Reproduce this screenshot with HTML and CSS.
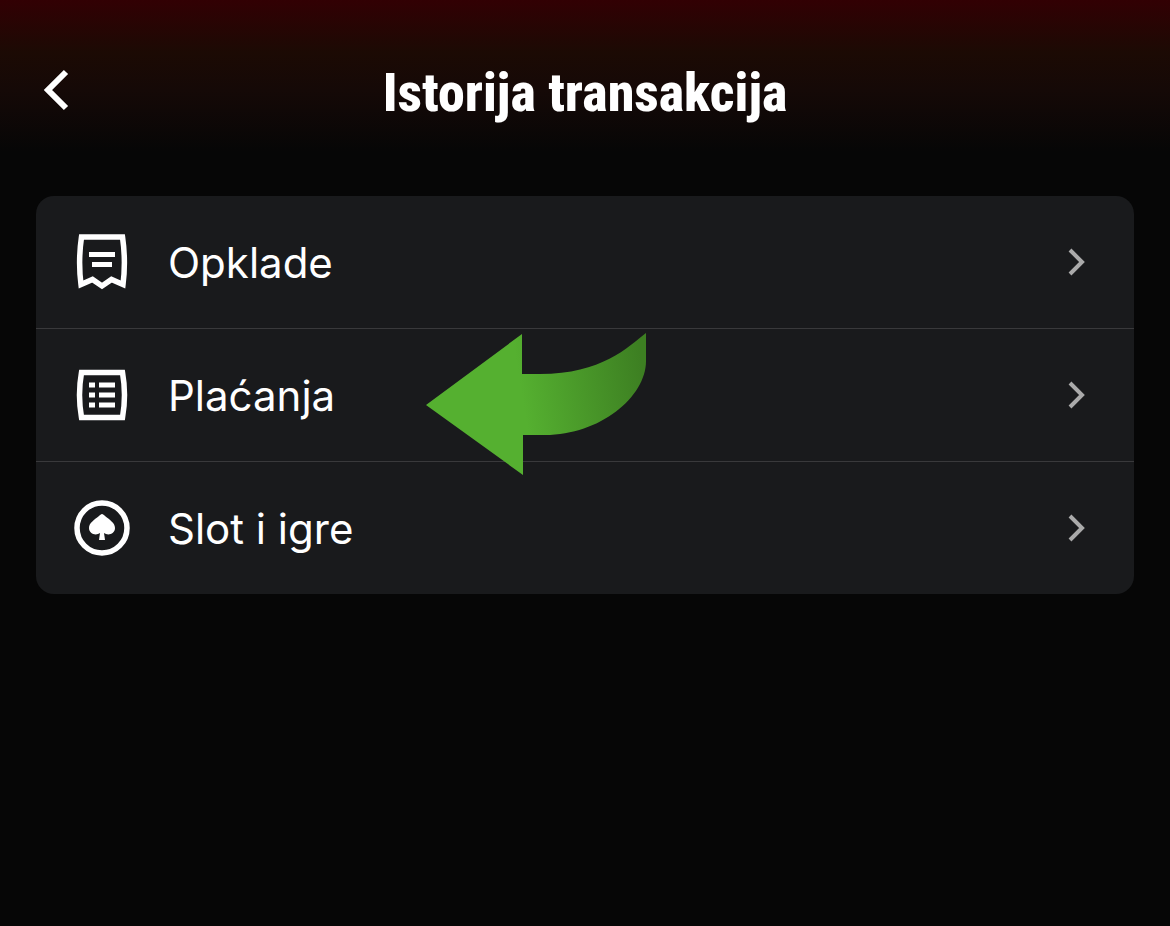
FILE: index.html
```
<!DOCTYPE html>
<html lang="sr-Latn">
<head>
    <meta charset="UTF-8">
    <meta name="viewport" content="width=device-width, initial-scale=1.0">
    <title>Istorija transakcija</title>
    <link rel="stylesheet" href="styles.css">
</head>
<body>
    <header class="header">
        <button type="button" class="back-btn" aria-label="Nazad">
            <svg width="32" height="48" viewBox="0 0 32 48" fill="none" stroke="#fff" stroke-width="6">
                <path d="M26 6 8 24l18 18"/>
            </svg>
        </button>
        <h1>Istorija transakcija</h1>
    </header>

    <main class="content">
        <nav class="menu">
            <a href="#opklade" class="menu-item">
                <svg class="icon" viewBox="0 0 60 60" fill="none" stroke="#fff" stroke-width="5.500">
                    <path d="M9.500 5h41q3.500 24 .5 47.500L39.500 47.500 30 54l-9.500-6.500L9 52.500Q6 29 9.500 5z"/>
                    <path stroke-width="5" d="M17 22.500h26M20 32.500h20"/>
                </svg>
                <span class="label">Opklade</span>
                <svg class="chevron" viewBox="0 0 20 32"><path d="M4 4l12 12L4 28"/></svg>
            </a>
            <a href="#placanja" class="menu-item">
                <svg class="icon" viewBox="0 0 60 60" fill="none" stroke="#fff" stroke-width="5.500">
                    <path d="M9.500 7.500h41q4 22.500 0 45h-41q-4-22.500 0-45z"/>
                    <path stroke-width="5" d="M17 20h6M27 20h16M17 30h6M27 30h16M17 40h6M27 40h16"/>
                </svg>
                <span class="label">Plaćanja</span>
                <svg class="chevron" viewBox="0 0 20 32"><path d="M4 4l12 12L4 28"/></svg>
                <!-- strelica preko stavke -->
                <svg class="arrow" viewBox="0 0 222 144">
                    <defs>
                        <linearGradient id="arrowFill" gradientUnits="userSpaceOnUse" x1="98" y1="70" x2="220" y2="50">
                            <stop offset="0" stop-color="#55b030"/>
                            <stop offset="1" stop-color="#3d7f22"/>
                        </linearGradient>
                    </defs>
                    <path fill="url(#arrowFill)" d="M1 73 97 2v40h18c62 0 88-27 106-41v28c0 36-46 74-101 74H98v40z"/>
                </svg>
            </a>
            <a href="#slot" class="menu-item">
                <svg class="icon" viewBox="0 0 60 60">
                    <circle cx="30" cy="30" r="25" fill="none" stroke="#fff" stroke-width="5.500"/>
                    <path fill="#fff" d="M30 16c1 0 2 1 3 2 5 4 10 7 10 12 0 6-7 8-11 5l1 7h-6l1-7c-4 3-11 1-11-5 0-5 5-8 10-12 1-1 2-2 3-2z"/>
                </svg>
                <span class="label">Slot i igre</span>
                <svg class="chevron" viewBox="0 0 20 32"><path d="M4 4l12 12L4 28"/></svg>
            </a>
        </nav>
    </main>
</body>
</html>
```
FILE: styles.css
```
* {
    box-sizing: border-box;
}
body {
    margin: 0;
    min-height: 100vh;
    background: #060606 linear-gradient(#320003 0, #1c0a04 52px, #150907 90px, #060606 152px) no-repeat;
    color: #fff;
    font-family: Inter, "Liberation Sans", sans-serif;
}
.header {
    display: grid;
    grid-template-columns: 32px 1fr 32px;
    align-items: center;
    height: 180px;
    padding: 0 40px;
}
.back-btn {
    padding: 0;
    border: none;
    background: none;
    cursor: pointer;
}
.back-btn svg {
    display: block;
}
.header h1 {
    margin: 0;
    padding-top: 6px;
    font-family: "Roboto Condensed", Roboto, sans-serif;
    font-size: 54px;
    font-weight: 800;
    line-height: 64px;
    text-align: center;
    white-space: nowrap;
}
.content {
    padding: 16px 36px;
}
.menu {
    border-radius: 18px;
    background: #191a1c;
}
.menu-item {
    position: relative;
    display: flex;
    align-items: center;
    height: 132px;
    padding: 0 48px 0 36px;
    color: #fff;
    text-decoration: none;
}
.menu-item + .menu-item {
    height: 133px;
    border-top: 1px solid #39393b;
}
.icon {
    width: 60px;
    height: 60px;
    margin-right: 36px;
}
.label {
    flex: 1;
    padding-top: 2px;
    font-size: 42px;
    line-height: 52px;
}
.chevron {
    width: 20px;
    height: 32px;
    fill: none;
    stroke: #aaa;
    stroke-width: 4;
}
.arrow {
    position: absolute;
    z-index: 1;
    top: 3px;
    left: 389px;
    width: 222px;
    height: 144px;
}
```
